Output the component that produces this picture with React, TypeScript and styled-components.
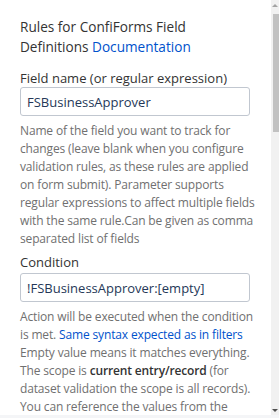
import React from 'react';
import styled, { createGlobalStyle } from 'styled-components';

const Global = createGlobalStyle`
  html, body {
    margin: 0;
    padding: 0;
    background: #f4f5f7;
    overflow: hidden;
  }
  body {
    font-family: 'Open Sans', 'Liberation Sans', sans-serif;
  }
`;

const Panel = styled.div`
  display: flex;
  height: 415px;
  width: 279px;
  background: #fff;
`;

const Content = styled.div`
  flex: 1;
  min-width: 0;
  overflow: hidden;
  padding: 17px 21px 0 20px;
`;

const ScrollTrack = styled.div`
  width: 8px;
  flex: none;
  display: flex;
  flex-direction: column;
  background: #f1f1f1;
`;

const ScrollButton = styled.div<{ $down?: boolean }>`
  height: 14px;
  flex: none;
  display: flex;
  justify-content: flex-end;
  align-items: ${(p) => (p.$down ? 'flex-end' : 'flex-start')};
  padding: ${(p) => (p.$down ? '0 1px 3px 0' : '4px 1px 0 0')};
  box-sizing: border-box;
`;

const Arrow = styled.span<{ $down?: boolean }>`
  width: 0;
  height: 0;
  border-left: 3px solid transparent;
  border-right: 3px solid transparent;
  ${(p) =>
    p.$down ? 'border-top: 3px solid #505050;' : 'border-bottom: 3px solid #a3a3a3;'}
`;

const Thumb = styled.div`
  height: 118px;
  margin-left: 2px;
  background: #c1c1c1;
`;

const Spacer = styled.div`
  flex: 1;
`;

const Intro = styled.div`
  font-size: 13.6px;
  line-height: 20px;
  color: #333;
  margin-bottom: 12px;
  white-space: nowrap;
`;

const Link = styled.a`
  color: #0052cc;
  text-decoration: none;
`;

const Field = styled.div`
  margin-bottom: 5px;
`;

const Label = styled.label<{ $gap?: number }>`
  display: block;
  font-size: 13px;
  line-height: 18px;
  color: #333;
  margin-bottom: ${(p) => p.$gap ?? 0}px;
`;

const Input = styled.input`
  box-sizing: border-box;
  display: block;
  width: 100%;
  height: 29px;
  padding: 0 6px;
  border: 1px solid #c1c7d0;
  border-radius: 3px;
  font-family: inherit;
  font-size: 13px;
  color: #253858;
  background: #fff;
  outline: none;
`;

const Help = styled.div`
  margin-top: 6px;
  font-size: 12px;
  line-height: 18px;
  letter-spacing: -0.15px;
  color: #707070;
  white-space: nowrap;

  b {
    color: #333;
    font-weight: 600;
  }
`;

const App: React.FC = () => {
  return (
    <>
      <Global />
      <Panel>
        <Content>
          <Intro>
            Rules for ConfiForms Field
            <br />
            Definitions <Link href="#">Documentation</Link>
          </Intro>

          <Field>
            <Label>Field name (or regular expression)</Label>
            <Input defaultValue="FSBusinessApprover" />
            <Help>
              Name of the field you want to track for
              <br />
              changes (leave blank when you configure
              <br />
              validation rules, as these rules are applied
              <br />
              on form submit). Parameter supports
              <br />
              regular expressions to affect multiple fields
              <br />
              with the same rule.Can be given as comma
              <br />
              separated list of fields
            </Help>
          </Field>

          <Field>
            <Label $gap={2}>Condition</Label>
            <Input defaultValue="!FSBusinessApprover:[empty]" />
            <Help>
              Action will be executed when the condition
              <br />
              is met. <Link href="#">Same syntax expected as in filters</Link>
              <br />
              Empty value means it matches everything.
              <br />
              The scope is <b>current entry/record</b> (for
              <br />
              dataset validation the scope is all records).
              <br />
              You can reference the values from the
            </Help>
          </Field>
        </Content>
        <ScrollTrack>
          <ScrollButton>
            <Arrow />
          </ScrollButton>
          <Thumb />
          <Spacer />
          <ScrollButton $down>
            <Arrow $down />
          </ScrollButton>
        </ScrollTrack>
      </Panel>
    </>
  );
};

export default App;
